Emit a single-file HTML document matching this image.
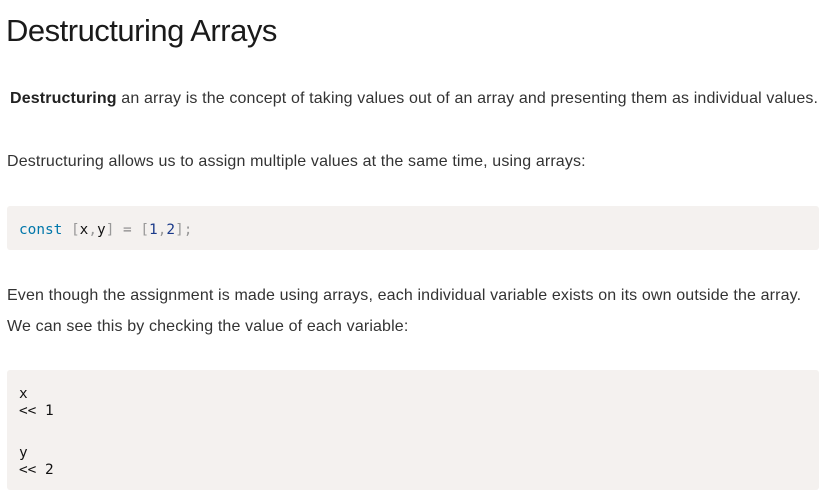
<!DOCTYPE html>
<html><head><style>
body{margin:0;background:#fff;width:831px;height:504px;overflow:hidden;font-family:"Liberation Sans",sans-serif;color:#222}
.h{position:absolute;left:6px;top:13px;font-size:31px;letter-spacing:-0.5px;color:#1a1a1a}
.p{position:absolute;left:7px;font-size:16px;color:#333;letter-spacing:0.14px;white-space:nowrap}
.box{position:absolute;left:7px;width:812px;background:#f4f1ef;border-radius:3px}
.c{position:absolute;left:19px;font-family:"DejaVu Sans Mono","Liberation Mono",monospace;font-size:14.4px;white-space:pre;color:#111}
</style></head><body>
<div class="h">Destructuring Arrays</div>
<div class="p" style="top:90px;left:10px"><b style="color:#222">Destructuring</b> an array is the concept of taking values out of an array and presenting them as individual values.</div>
<div class="p" style="top:153px">Destructuring allows us to assign multiple values at the same time, using arrays:</div>
<div class="box" style="top:206px;height:44px"></div>
<div class="c" style="top:222px"><span style="color:#07a">const</span> <span style="color:#999">[</span>x<span style="color:#999">,</span>y<span style="color:#999">]</span> <span style="color:#888">=</span> <span style="color:#999">[</span><span style="color:#1a3a8a">1</span><span style="color:#999">,</span><span style="color:#1a3a8a">2</span><span style="color:#999">];</span></div>
<div class="p" style="top:287px">Even though the assignment is made using arrays, each individual variable exists on its own outside the array.</div>
<div class="p" style="top:318px">We can see this by checking the value of each variable:</div>
<div class="box" style="top:370px;height:120px"></div>
<div class="c" style="top:386px">x</div>
<div class="c" style="top:403px">&lt;&lt; 1</div>
<div class="c" style="top:445px">y</div>
<div class="c" style="top:462px">&lt;&lt; 2</div>
</body></html>
